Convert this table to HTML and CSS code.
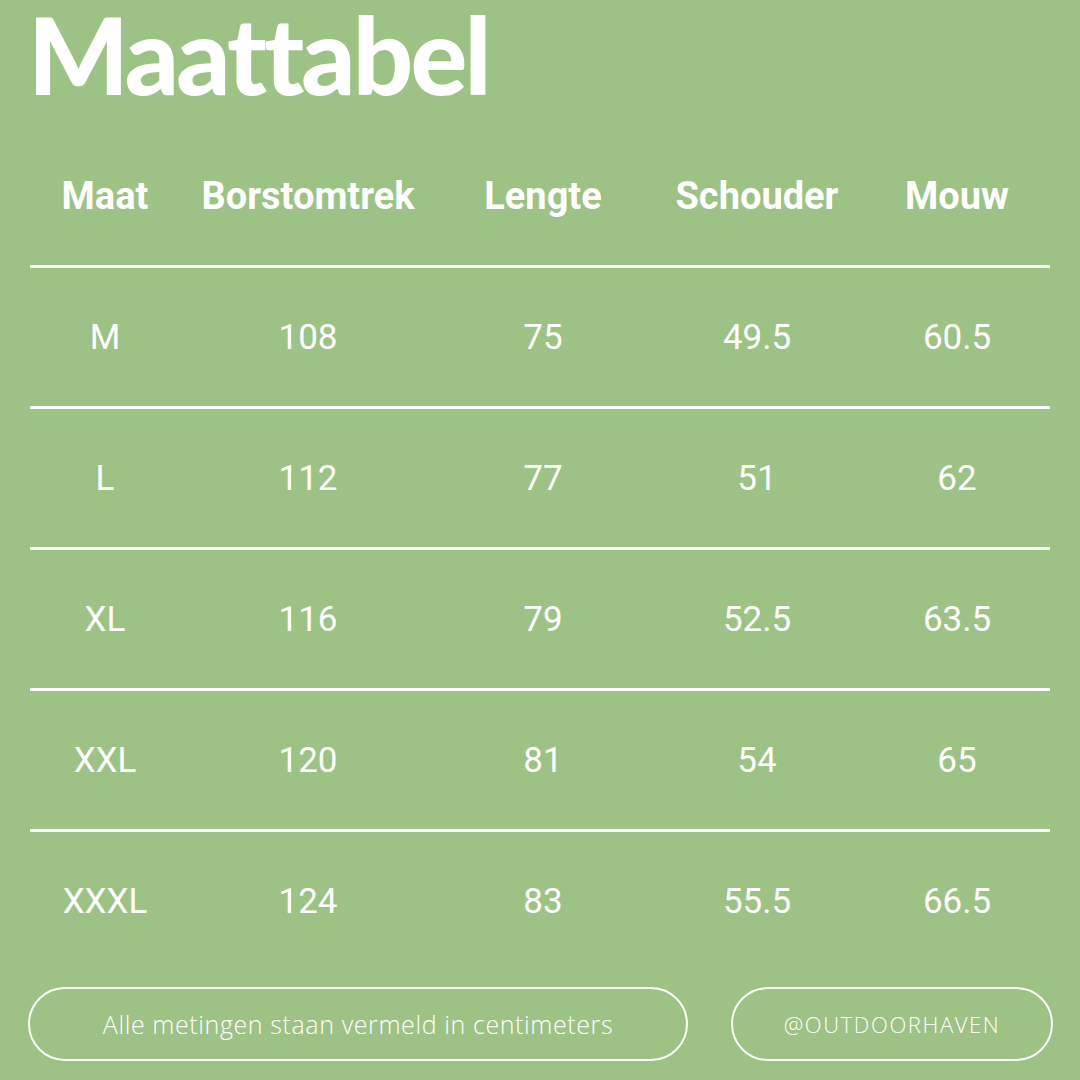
FILE: index.html
```html
<!DOCTYPE html>
<html lang="nl">
<head>
<meta charset="utf-8">
<link rel="stylesheet" href="styles.css">
</head>
<body>
<div class="page">
  <h1 class="title">Maattabel</h1>
  <div class="table">
    <div class="row head">
      <div>Maat</div><div>Borstomtrek</div><div>Lengte</div><div>Schouder</div><div>Mouw</div>
    </div>
    <div class="row"><div>M</div><div>108</div><div>75</div><div>49.5</div><div>60.5</div></div>
    <div class="row"><div>L</div><div>112</div><div>77</div><div>51</div><div>62</div></div>
    <div class="row"><div>XL</div><div>116</div><div>79</div><div>52.5</div><div>63.5</div></div>
    <div class="row"><div>XXL</div><div>120</div><div>81</div><div>54</div><div>65</div></div>
    <div class="row"><div>XXXL</div><div>124</div><div>83</div><div>55.5</div><div>66.5</div></div>
  </div>
  <div class="footer">
    <div class="pill note">Alle metingen staan vermeld in centimeters</div>
    <div class="pill handle">@OUTDOORHAVEN</div>
  </div>
</div>
</body>
</html>
```
FILE: styles.css
```css
html, body {
  margin: 0;
  padding: 0;
  background: #9dc285;
}
.page {
  width: 1080px;
  height: 1080px;
  box-sizing: border-box;
  padding: 0 30px 0 30px;
  color: #fff;
  font-family: Roboto, "Liberation Sans", sans-serif;
  overflow: hidden;
}
.title {
  margin: 0 0 0 -2px;
  height: 126px;
  box-sizing: border-box;
  padding-top: 0;
  font-family: Lato, "Liberation Sans", sans-serif;
  font-weight: 900;
  font-size: 106px;
  line-height: 108px;
  letter-spacing: -2.8px;
}
.row {
  display: grid;
  grid-template-columns: 150px 256px 214px 214px 186px;
  height: 141px;
  box-sizing: border-box;
  border-top: 3px solid #fff;
  align-items: center;
  text-align: center;
  font-size: 35px;
  font-weight: 400;
}
.row.head {
  border-top: none;
  height: 139px;
  font-weight: 700;
  font-size: 38px;
}
.footer {
  display: flex;
  gap: 43px;
  margin: 17px -3px 0 -2px;
}
.pill {
  flex: 0 0 auto;
  height: 74px;
  box-sizing: border-box;
  border: 2px solid #fff;
  border-radius: 37px;
  display: flex;
  align-items: center;
  justify-content: center;
  font-family: "Open Sans", "Liberation Sans", sans-serif;
  font-weight: 300;
}
.note {
  width: 660px;
  font-size: 25px;
  letter-spacing: 0.6px;
}
.handle {
  width: 322px;
  font-size: 22px;
  letter-spacing: 1.6px;
}
```
